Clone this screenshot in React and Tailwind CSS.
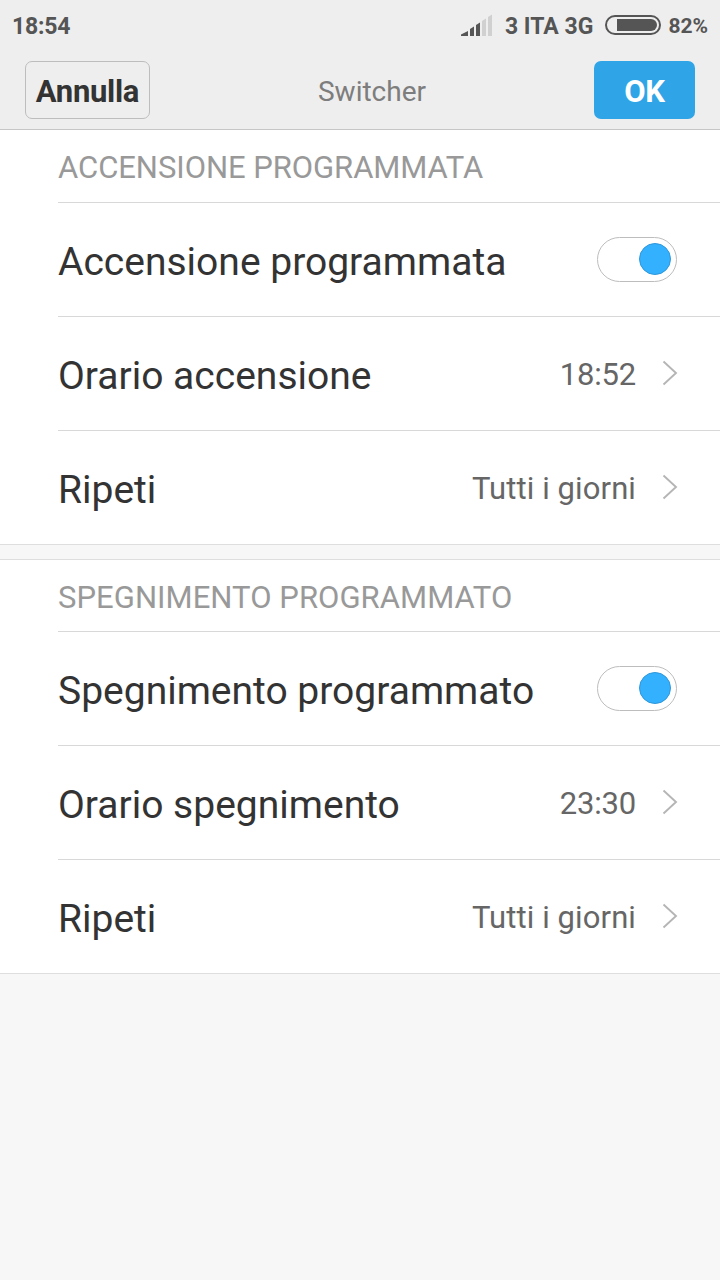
import { useState } from 'react';

const SECTIONS = [
  {
    id: 'on',
    title: 'ACCENSIONE PROGRAMMATA',
    toggle: 'Accensione programmata',
    rows: [
      { label: 'Orario accensione', value: '18:52', time: true },
      { label: 'Ripeti', value: 'Tutti i giorni' },
    ],
  },
  {
    id: 'off',
    title: 'SPEGNIMENTO PROGRAMMATO',
    toggle: 'Spegnimento programmato',
    rows: [
      { label: 'Orario spegnimento', value: '23:30', time: true },
      { label: 'Ripeti', value: 'Tutti i giorni' },
    ],
  },
];

function SignalIcon() {
  return (
    <svg className="h-[22px] w-8" viewBox="0 0 32 22" aria-hidden>
      <g fill="#555555">
        <path d="M0 22V20.5L7 17V22Z" />
        <path d="M9 22V15L13 12.5V22Z" />
        <path d="M15 22V11L19 8.5V22Z" />
      </g>
      <g fill="#d0d0d0">
        <path d="M21 22V7L25 4.5V22Z" />
        <path d="M27 22V3L31 0.5V22Z" />
      </g>
    </svg>
  );
}

function BatteryIcon() {
  return (
    <svg className="h-5 w-14" viewBox="0 0 56 20" aria-hidden>
      <rect x="1" y="1" width="54" height="18" rx="9" fill="none" stroke="#555555" strokeWidth="2" />
      <path d="M12 4H46A6 6 0 0 1 46 16H12Z" fill="#555555" />
    </svg>
  );
}

function StatusBar() {
  return (
    <div className="flex h-[50px] items-center pl-3 pr-3 text-[23px] font-bold leading-none text-[#555555]">
      <span className="mt-0.5 tracking-[-0.2px]">18:54</span>
      <div className="ml-auto flex items-center">
        <SignalIcon />
        <span className="ml-3 mt-0.5">3 ITA 3G</span>
        <span className="ml-3 flex">
          <BatteryIcon />
        </span>
        <span className="ml-[7px] mt-0.5 text-[21px]">82%</span>
      </div>
    </div>
  );
}

function ActionBar() {
  return (
    <div className="flex h-20 items-start justify-between border-b border-[#c6c6c6] pl-[25px] pr-[25px] pt-[11px]">
      <button
        type="button"
        className="h-[58px] w-[125px] rounded-[7px] border border-[#bdbdbd] pt-0.5 text-[31px] font-bold leading-none tracking-[-0.3px] text-[#333333]"
      >
        Annulla
      </button>
      <h1 className="pt-[17px] text-[28px] leading-none text-[#7d7d7d]">Switcher</h1>
      <button
        type="button"
        className="h-[58px] w-[101px] rounded-[7px] bg-[#2fa5e7] pt-0.5 text-[31px] font-bold leading-none tracking-[-0.3px] text-white"
      >
        OK
      </button>
    </div>
  );
}

function Toggle({ checked, onChange, label }) {
  return (
    <button
      type="button"
      role="switch"
      aria-checked={checked}
      aria-label={label}
      onClick={() => onChange(!checked)}
      className={`mb-px flex h-[45px] w-20 items-center rounded-full border border-[#bdbdbd] bg-white px-[5px] ${
        checked ? 'justify-end' : 'justify-start'
      }`}
    >
      <span
        className={`mb-px size-8 rounded-full border ${
          checked ? 'border-[#2f97da] bg-[#33b1ff]' : 'border-[#b0b0b0] bg-[#d0d0d0]'
        }`}
      />
    </button>
  );
}

function Chevron() {
  return (
    <svg className="mb-px ml-[26px] h-[26px] w-4" viewBox="0 0 16 26" fill="none" stroke="#b5b5b5" strokeWidth="1.9" aria-hidden>
      <path d="M1.5 1.5L14 13L1.5 24.5" />
    </svg>
  );
}

function Row({ label, last, children, className = 'pr-[42px]' }) {
  return (
    <div className={`flex items-center ${last ? 'h-[113px]' : 'h-[114px] border-b border-[#d8d8d8]'} ${className}`}>
      <span className="mt-1.5 text-[39px] leading-none text-[#333333]">{label}</span>
      <div className="ml-auto flex items-center">{children}</div>
    </div>
  );
}

function Section({ section, className, titleClass }) {
  const [enabled, setEnabled] = useState(true);

  return (
    <section className={`border-b border-[#dedede] bg-white pl-[58px] ${className}`}>
      <h2 className={`flex h-[72px] items-center border-b border-[#d8d8d8] text-[31px] leading-none text-[#999999] ${titleClass}`}>
        {section.title}
      </h2>
      <Row label={section.toggle} className="pr-[43px]">
        <Toggle checked={enabled} onChange={setEnabled} label={section.toggle} />
      </Row>
      {section.rows.map((row, i) => (
        <Row key={row.label} label={row.label} last={i === section.rows.length - 1}>
          <span className={`mt-0.5 text-[31px] leading-none text-[#666666] ${row.time ? 'tracking-[-0.2px]' : 'tracking-[0.1px]'}`}>
            {row.value}
          </span>
          <Chevron />
        </Row>
      ))}
    </section>
  );
}

export default function App() {
  return (
    <div className="min-h-screen bg-[#f7f7f7] font-['Roboto',sans-serif]">
      <header className="bg-[#eeeeee]">
        <StatusBar />
        <ActionBar />
      </header>
      <main>
        <Section section={SECTIONS[0]} className="pt-px" titleClass="pt-0.5 tracking-[-0.05px]" />
        <Section section={SECTIONS[1]} className="mt-3.5 border-t" titleClass="pt-1 tracking-[0.05px]" />
      </main>
    </div>
  );
}
